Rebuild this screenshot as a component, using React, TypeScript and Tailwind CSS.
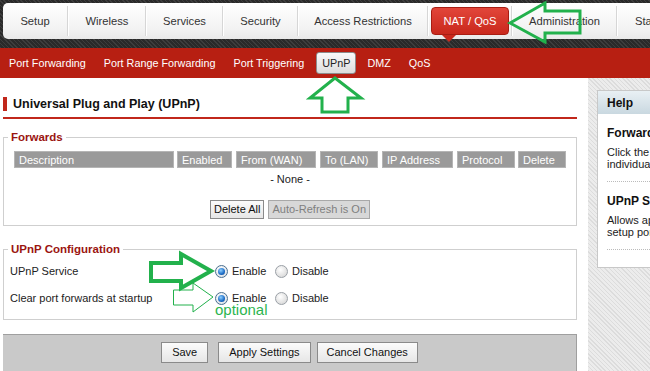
import React from "react";

const tabs = [
  { label: "Setup", cls: "w-[64px]" },
  { label: "Wireless", cls: "w-[76px]" },
  { label: "Services", cls: "w-[75px]" },
  { label: "Security", cls: "w-[73px]" },
  { label: "Access Restrictions", cls: "w-[128px]" },
];

function Divider() {
  return <div className="w-[2px] h-[30px] mt-[3px] border-l border-[#d6d6d6] bg-white shrink-0" />;
}

function Radio({ checked }: { checked?: boolean }) {
  return (
    <span
      className={
        "inline-flex items-center justify-center w-[13px] h-[13px] rounded-full border shrink-0 " +
        (checked
          ? "border-[#4b6f8f] bg-[radial-gradient(circle_at_40%_35%,#ffffff,#d4dbe2)]"
          : "border-[#9aa0a6] bg-[radial-gradient(circle_at_40%_35%,#ffffff,#d0d0d0)]")
      }
    >
      {checked && (
        <span className="w-[7px] h-[7px] rounded-full bg-[radial-gradient(circle_at_40%_35%,#8fd0ff,#1b6bc6_60%,#0b3f86)]" />
      )}
    </span>
  );
}

function RadioPair() {
  return (
    <div className="flex items-center">
      <Radio checked />
      <span className="ml-[4px] w-[43px]">Enable</span>
      <Radio />
      <span className="ml-[4px]">Disable</span>
    </div>
  );
}

function Btn({ children, disabled, cls }: { children: React.ReactNode; disabled?: boolean; cls?: string }) {
  return (
    <div
      className={
        "h-[19px] flex items-center border text-[11px] leading-none " +
        (disabled
          ? "border-[#a8a8a8] bg-[#d8d8d8] text-[#7f7f7f]"
          : "border-[#8a8a8a] bg-[linear-gradient(#fbfbfb,#e6e6e6)] text-[#111]") +
        " " +
        (cls || "px-[3px]")
      }
    >
      {children}
    </div>
  );
}

export default function App() {
  return (
    <div className="relative w-[650px] h-[371px] overflow-hidden bg-white font-['Liberation_Sans',Arial,sans-serif] text-[11px] text-[#222]">
      {/* Top dark band with tabs */}
      <div className="h-[48px] pt-[3px] pl-[3px] bg-[repeating-linear-gradient(45deg,#3d3d3d_0px,#3d3d3d_1px,#2a2a2a_1px,#2a2a2a_3px)]">
        <div className="flex h-[36px] w-[700px] rounded-[5px] bg-[linear-gradient(#ffffff,#f3f3f3_70%,#e9e9e9)] text-[11.2px] text-[#333]">
          {tabs.map((t, i) => (
            <React.Fragment key={t.label}>
              {i > 0 && <Divider />}
              <div className={"flex items-center justify-center shrink-0 " + t.cls}>{t.label}</div>
            </React.Fragment>
          ))}
          <Divider />
          <div className="w-[82px] shrink-0 flex items-center justify-center">
            <div className="relative w-[78px] h-[28px] rounded-[4px] border border-[#a81d12] bg-[linear-gradient(#e2463a,#c9281c)] text-white flex items-center justify-center">
              NAT / QoS
              <div className="absolute left-[10px] top-[27px] w-0 h-0 border-l-[7px] border-r-[7px] border-t-[7px] border-l-transparent border-r-transparent border-t-[#c9281c]" />
            </div>
          </div>
          <Divider />
          <div className="w-[103px] shrink-0 flex items-center justify-center">Administration</div>
          <Divider />
          <div className="w-[60px] shrink-0 flex items-center pl-[17px]">Status</div>
        </div>
      </div>

      {/* Red sub nav */}
      <div className="h-[30px] bg-[#b71f12] flex items-center text-white text-[10.8px]">
        <span className="px-[9px]">Port Forwarding</span>
        <span className="px-[9px]">Port Range Forwarding</span>
        <span className="px-[9px]">Port Triggering</span>
        <span className="ml-[3px] h-[22px] px-[5px] flex items-center rounded-[3px] border border-[#8d8d8d] bg-[linear-gradient(#fafafa,#dcdcdc)] text-[#222]">
          UPnP
        </span>
        <span className="ml-[2px] px-[9px]">DMZ</span>
        <span className="px-[9px]">QoS</span>
      </div>

      {/* Content row */}
      <div className="flex h-[293px]">
        <div className="ml-[3px] w-[575px] flex flex-col">
          <div className="mt-[19px] flex items-center h-[14px]">
            <div className="w-[4px] h-[14px] bg-[#c1271b]" />
            <div className="ml-[6px] text-[12.5px] font-bold text-[#111]">Universal Plug and Play (UPnP)</div>
          </div>
          <div className="mt-[6px] h-[2px] bg-[#c1271b]" />

          <fieldset className="mt-[10px] border border-[#cfcfcf] px-[10px] pb-[6px]">
            <legend className="ml-[-6px] px-[3px] text-[11.5px] font-bold text-[#9b1510]">Forwards</legend>
            <div className="mt-[5px] flex text-white text-[11px] h-[17px]">
              <div className="w-[160px] bg-[#9a9a9a] border border-[#b5b5b5] px-[4px] flex items-center">Description</div>
              <div className="ml-[3px] w-[55px] bg-[#9a9a9a] border border-[#b5b5b5] px-[4px] flex items-center">Enabled</div>
              <div className="ml-[4px] w-[80px] bg-[#9a9a9a] border border-[#b5b5b5] px-[4px] flex items-center">From (WAN)</div>
              <div className="ml-[4px] w-[58px] bg-[#9a9a9a] border border-[#b5b5b5] px-[4px] flex items-center">To (LAN)</div>
              <div className="ml-[4px] w-[71px] bg-[#9a9a9a] border border-[#b5b5b5] px-[4px] flex items-center">IP Address</div>
              <div className="ml-[4px] w-[58px] bg-[#9a9a9a] border border-[#b5b5b5] px-[4px] flex items-center">Protocol</div>
              <div className="ml-[3px] w-[48px] bg-[#9a9a9a] border border-[#b5b5b5] px-[4px] flex items-center">Delete</div>
            </div>
            <div className="w-[552px] text-center mt-[5px] leading-[12px]">- None -</div>
            <div className="w-[552px] mt-[15px] flex justify-center gap-[4px]">
              <Btn>Delete All</Btn>
              <Btn disabled>Auto-Refresh is On</Btn>
            </div>
          </fieldset>

          <fieldset className="mt-[15px] border border-[#cfcfcf] px-[6px] pb-[12px]">
            <legend className="ml-[-2px] px-[3px] text-[11.5px] font-bold text-[#9b1510]">UPnP Configuration</legend>
            <div className="mt-[5px] flex items-center h-[16px]">
              <div className="w-[205px]">UPnP Service</div>
              <RadioPair />
            </div>
            <div className="mt-[11px] flex items-center h-[16px]">
              <div className="w-[205px]">Clear port forwards at startup</div>
              <RadioPair />
            </div>
          </fieldset>

          <div className="mt-[14px] flex-1 bg-[#c9c9c9] border-t border-r border-[#9f9f9f] flex justify-center pt-[7px]">
            <div className="flex h-[21px]">
              <Btn cls="h-[21px] px-[10px]">Save</Btn>
              <Btn cls="ml-[10px] h-[21px] px-[10px]">Apply Settings</Btn>
              <Btn cls="ml-[6px] h-[21px] px-[9px]">Cancel Changes</Btn>
            </div>
          </div>
        </div>

        {/* Side panel */}
        <div className="ml-[11px] flex-1 pl-[9px] pt-[12px] bg-[repeating-linear-gradient(45deg,#dcdcdc_0px,#dcdcdc_1px,#ececec_1px,#ececec_3px)]">
          <div className="w-[120px] h-[178px] bg-white border border-[#c8c8c8]">
            <div className="h-[23px] bg-[linear-gradient(#e9f0f4,#c9d8e0)] pl-[9px] flex items-center text-[12px] font-bold text-[#111]">
              Help
            </div>
            <div className="pl-[9px] pr-[6px]">
              <div className="mt-[10px] text-[12px] font-bold text-[#111] whitespace-nowrap">Forwards</div>
              <div className="mt-[4px] leading-[12px] whitespace-nowrap">Click the <br />individual</div>
              <div className="mt-[11px] border-t border-dotted border-[#bbb]" />
              <div className="mt-[10px] text-[12px] font-bold text-[#111] whitespace-nowrap">UPnP Service</div>
              <div className="mt-[4px] leading-[12px] whitespace-nowrap">Allows apps<br />setup port</div>
              <div className="mt-[11px] border-t border-dotted border-[#bbb]" />
            </div>
          </div>
        </div>
      </div>

      {/* Annotation overlay */}
      <svg className="absolute left-0 top-0 pointer-events-none" width="650" height="371" viewBox="0 0 650 371">
        <polygon
          points="510,23 545,3 545,11 580,11 580,33 545,33 545,42"
          fill="none"
          stroke="#22b14c"
          strokeWidth="3"
          strokeLinejoin="miter"
        />
        <polygon
          points="335,78 361,98 348,98 348,112 322,112 322,98 310,98"
          fill="none"
          stroke="#22b14c"
          strokeWidth="3"
        />
        <polygon
          points="211,271 181,254 181,263 151,263 151,281 181,281 181,288"
          fill="none"
          stroke="#22b14c"
          strokeWidth="4"
        />
        <polygon
          points="213,297 193,283 193,290 173.5,290 173.5,305 193,305 193,312"
          fill="none"
          stroke="#22b14c"
          strokeWidth="1"
        />
      </svg>
      <div className="absolute left-[215px] top-[302px] text-[15px] leading-none text-[#2cb54f] font-['Liberation_Sans',Arial,sans-serif] pointer-events-none">
        optional
      </div>
    </div>
  );
}
